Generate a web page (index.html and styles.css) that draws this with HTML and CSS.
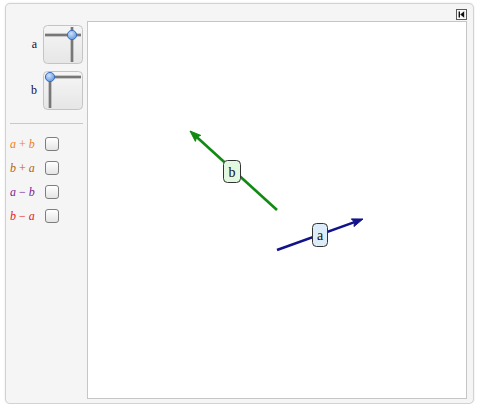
FILE: index.html
```html
<!DOCTYPE html>
<html>
<head>
<meta charset="utf-8">
<link rel="stylesheet" href="styles.css">
</head>
<body>
<div class="panel">
  <div class="topbar">
    <svg class="toggle" width="11" height="11" viewBox="0 0 11 11">
      <rect x="0.5" y="0.5" width="10" height="10" fill="#fafafa" stroke="#5a5a5a"/>
      <rect x="2.6" y="2.5" width="1.4" height="6" fill="#111"/>
      <polygon points="4.2,5.5 8.2,2.3 8.2,8.7" fill="#111"/>
    </svg>
  </div>
  <div class="main">
    <div class="sidebar">
      <div class="slider-row">
        <span class="slabel">a</span>
        <svg class="pad" width="40" height="39" viewBox="0 0 40 39">
          <defs>
            <linearGradient id="pg" x1="0" y1="0" x2="0" y2="1">
              <stop offset="0" stop-color="#f6f6f6"/>
              <stop offset="1" stop-color="#e6e6e6"/>
            </linearGradient>
            <radialGradient id="tg" cx="0.4" cy="0.35" r="0.7">
              <stop offset="0" stop-color="#cfe2fb"/>
              <stop offset="1" stop-color="#5f94de"/>
            </radialGradient>
          </defs>
          <rect x="0.5" y="0.5" width="39" height="38" rx="4" fill="url(#pg)" stroke="#c4c4c4"/>
          <line x1="2" y1="10" x2="38" y2="10" stroke="#9a9a9a" stroke-width="3"/>
          <line x1="2" y1="10" x2="38" y2="10" stroke="#555" stroke-width="1"/>
          <line x1="29" y1="2" x2="29" y2="37" stroke="#9a9a9a" stroke-width="3"/>
          <line x1="29" y1="2" x2="29" y2="37" stroke="#555" stroke-width="1"/>
          <circle cx="29" cy="10" r="4.6" fill="url(#tg)" stroke="#3a6cc0" stroke-width="1"/>
        </svg>
      </div>
      <div class="slider-row">
        <span class="slabel">b</span>
        <svg class="pad" width="40" height="39" viewBox="0 0 40 39">
          <rect x="0.5" y="0.5" width="39" height="38" rx="4" fill="url(#pg)" stroke="#c4c4c4"/>
          <line x1="2" y1="6" x2="38" y2="6" stroke="#9a9a9a" stroke-width="3"/>
          <line x1="2" y1="6" x2="38" y2="6" stroke="#555" stroke-width="1"/>
          <line x1="7" y1="2" x2="7" y2="37" stroke="#9a9a9a" stroke-width="3"/>
          <line x1="7" y1="2" x2="7" y2="37" stroke="#555" stroke-width="1"/>
          <circle cx="7" cy="6" r="4.6" fill="url(#tg)" stroke="#3a6cc0" stroke-width="1"/>
        </svg>
      </div>
      <div class="sep"></div>
      <div class="checks">
        <label class="crow"><span class="clabel c1"><i>a</i> + <i>b</i></span><span class="box"></span></label>
        <label class="crow"><span class="clabel c2"><i>b</i> + <i>a</i></span><span class="box"></span></label>
        <label class="crow"><span class="clabel c3"><i>a</i> − <i>b</i></span><span class="box"></span></label>
        <label class="crow"><span class="clabel c4"><i>b</i> − <i>a</i></span><span class="box"></span></label>
      </div>
    </div>
    <div class="canvas">
      <svg width="378" height="376" viewBox="0 0 378 376">
        <line x1="189" y1="188" x2="108.7" y2="115" stroke="#108a10" stroke-width="2.6"/>
        <polygon points="102,109 112.8,113.4 108.7,115 107.4,119.4" fill="#108a10" stroke="#108a10" stroke-width="1"/>
        <line x1="189" y1="228" x2="266.5" y2="200.1" stroke="#12128a" stroke-width="2.6"/>
        <polygon points="275,197 266,204.5 266.5,200.1 263.3,196.9" fill="#12128a" stroke="#12128a" stroke-width="1"/>
        <rect x="135.5" y="138.5" width="17" height="22" rx="4" fill="#e2f8e0" stroke="#333" stroke-width="1"/>
        <text x="144" y="154.5" class="vlabel" text-anchor="middle">b</text>
        <rect x="224.5" y="201.5" width="15" height="23" rx="4" fill="#dcecf8" stroke="#333" stroke-width="1"/>
        <text x="232" y="217.5" class="vlabel" text-anchor="middle">a</text>
      </svg>
    </div>
  </div>
</div>
</body>
</html>
```

FILE: styles.css
```css
html, body {
  margin: 0;
  padding: 0;
  background: #ffffff;
}
body {
  font-family: "Liberation Serif", "Times New Roman", serif;
}
.panel {
  margin: 3px 0 0 5px;
  width: 462px;
  height: 395px;
  border: 1px solid #d2d2d2;
  border-radius: 5px;
  background: #f5f5f5;
  box-shadow: 0 0 2px rgba(0,0,0,0.12);
  padding: 0 5px 4px 0;
  box-sizing: content-box;
  display: flex;
  flex-direction: column;
}
.topbar {
  height: 17px;
  display: flex;
  justify-content: flex-end;
  align-items: flex-start;
  padding-top: 5px;
  padding-right: 1px;
  box-sizing: border-box;
}
.toggle {
  display: block;
}
.main {
  display: flex;
  flex: 1;
}
.sidebar {
  width: 81px;
  display: flex;
  flex-direction: column;
  padding-top: 4px;
  box-sizing: border-box;
}
.slider-row {
  display: flex;
  align-items: center;
  height: 39px;
  margin-bottom: 7px;
}
.slabel {
  width: 37px;
  text-align: right;
  padding-right: 6px;
  box-sizing: border-box;
  font-size: 12px;
  color: #10103a;
}
.pad {
  display: block;
}
.sep {
  margin: 6px 0 0 4px;
  width: 73px;
  height: 1px;
  background: #c8c8c8;
}
.checks {
  display: flex;
  flex-direction: column;
  padding-top: 13px;
  gap: 10px;
}
.crow {
  display: flex;
  align-items: center;
  height: 14px;
}
.clabel {
  width: 39px;
  padding-left: 4px;
  box-sizing: border-box;
  font-size: 12px;
  white-space: nowrap;
}
.clabel i {
  font-style: italic;
}
.c1 { color: #f0801e; }
.c2 { color: #b8640c; }
.c3 { color: #7a2296; }
.c4 { color: #e81818; }
.box {
  width: 12px;
  height: 12px;
  border: 1px solid #7e7e7e;
  border-radius: 3px;
  background: linear-gradient(#ffffff, #e4e4e4);
  display: block;
}
.canvas {
  width: 380px;
  height: 378px;
  border: 1px solid #c6c6c6;
  background: #ffffff;
  box-sizing: border-box;
}
.canvas svg {
  display: block;
}
.vlabel {
  font-family: "Liberation Serif", "Times New Roman", serif;
  font-size: 14px;
  fill: #111;
}
```
